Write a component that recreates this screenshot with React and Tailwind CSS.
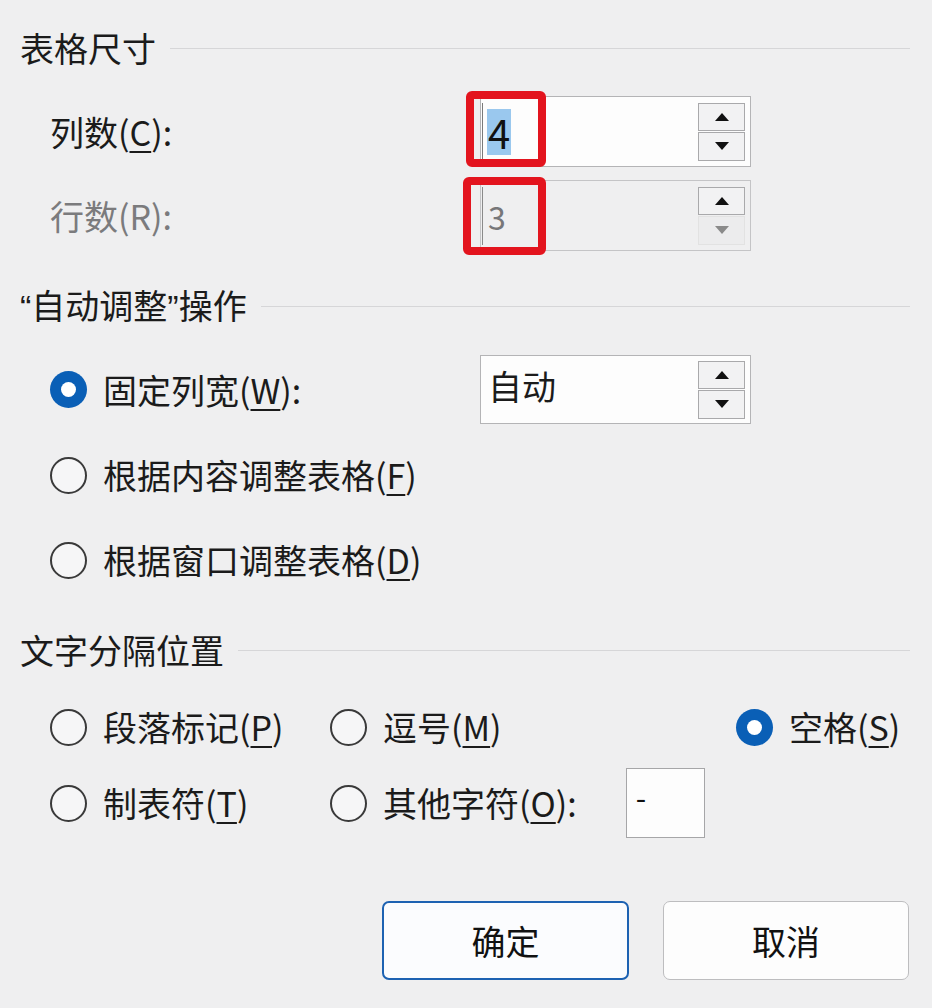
import React from 'react';

const FONT = { fontFamily: '"Noto Sans CJK SC", "Noto Sans", sans-serif' };

function Key({ children }) {
  return <span className="underline decoration-[1.5px] underline-offset-[5px]">{children}</span>;
}

function Header({ children }) {
  return (
    <div className="flex items-center h-[40px] pl-[20px] pr-[22px]">
      <span className="text-[34px] leading-none text-[#1b1b1b] whitespace-nowrap">{children}</span>
      <div className="flex-1 h-px bg-[#d6d6d8] ml-[14px]" />
    </div>
  );
}

function Arrow({ up, muted }) {
  return (
    <svg width="16" height="10" viewBox="0 0 16 10">
      <polygon points={up ? '8,1 15,9 1,9' : '1,1 15,1 8,9'} fill={muted ? '#8a8a8a' : '#111'} />
    </svg>
  );
}

function SpinButtons({ disabled }) {
  return (
    <div className="flex flex-col gap-px">
      <div className="w-[47px] h-[28px] flex items-center justify-center border border-[#a9a9ab] bg-[#f2f2f3]">
        <Arrow up />
      </div>
      <div
        className={
          disabled
            ? 'w-[47px] h-[29px] flex items-center justify-center border border-[#e2e2e2] bg-[#ececed]'
            : 'w-[47px] h-[29px] flex items-center justify-center border border-[#a9a9ab] bg-[#f2f2f3]'
        }
      >
        <Arrow muted={disabled} />
      </div>
    </div>
  );
}

function Radio({ checked }) {
  if (checked) {
    return (
      <div className="w-[37px] h-[37px] shrink-0 rounded-full bg-[#0a5fb6] flex items-center justify-center">
        <div className="w-[15px] h-[15px] rounded-full bg-white" />
      </div>
    );
  }
  return <div className="w-[37px] h-[37px] shrink-0 rounded-full border-[2px] border-[#3a3a3a] bg-[#f6f6f7]" />;
}

function RadioLabel({ checked, children }) {
  return (
    <div className="flex items-center gap-[16px]">
      <Radio checked={checked} />
      <span className="text-[34px] leading-none text-[#1b1b1b] whitespace-nowrap">{children}</span>
    </div>
  );
}

// narrow latin quote marks like the original dialog font
function Q({ children }) {
  return <span style={{ fontFamily: '"Liberation Sans", sans-serif' }}>{children}</span>;
}

export default function App() {
  return (
    <div className="w-[932px] h-[1008px] bg-[#efeff0] flex flex-col pt-[28px] overflow-hidden" style={FONT}>
      <Header>表格尺寸</Header>

      {/* 列数 */}
      <div className="flex items-center h-[71px] mt-[28px]">
        <div className="w-[480px] pl-[50px] text-[34px] leading-none text-[#1b1b1b]">
          列数(<Key>C</Key>):
        </div>
        <div className="relative w-[271px] h-[71px] border border-[#b4b4b6] bg-[#fdfdfd] flex items-center justify-between pr-[5px]">
          <div className="flex items-center h-full pl-[1px]">
            <div className="w-px h-[58px] bg-[#7a7a7a]" />
            <span className="ml-[4px] bg-[#9ac8ee] h-[46px] px-[1px] text-[40px] leading-[46px] text-[#111]">4</span>
          </div>
          <SpinButtons />
          <div className="absolute left-[-15px] top-[-6px] w-[80px] h-[76px] border-[8px] border-[#e3141e] rounded-[6px]" />
        </div>
      </div>

      {/* 行数 */}
      <div className="flex items-center h-[71px] mt-[13px]">
        <div className="w-[480px] pl-[50px] text-[34px] leading-none text-[#7b7b7d]">行数(R):</div>
        <div className="relative w-[271px] h-[71px] border border-[#c4c4c6] bg-[#efeff0] flex items-center justify-between pr-[5px]">
          <div className="flex items-center h-full pl-[1px]">
            <div className="w-px h-[58px] bg-[#8a8a8a]" />
            <span className="ml-[5px] text-[32px] leading-none text-[#777779]">3</span>
          </div>
          <SpinButtons disabled />
          <div className="absolute left-[-18px] top-[-4px] w-[83px] h-[78px] border-[8px] border-[#e3141e] rounded-[6px]" />
        </div>
      </div>

      <div className="mt-[35px]">
        <Header>
          <Q>“</Q>自动调整<Q>”</Q>操作
        </Header>
      </div>

      {/* 固定列宽 */}
      <div className="flex items-center h-[69px] mt-[29px]">
        <div className="w-[480px] pl-[50px]">
          <RadioLabel checked>
            固定列宽(<Key>W</Key>):
          </RadioLabel>
        </div>
        <div className="w-[271px] h-[69px] border border-[#b4b4b6] bg-[#fdfdfd] flex items-center justify-between pr-[5px]">
          <span className="pl-[7px] pb-[8px] text-[34px] leading-none text-[#1b1b1b]">自动</span>
          <SpinButtons />
        </div>
      </div>

      <div className="flex items-center h-[70px] mt-[16px] pl-[50px]">
        <RadioLabel>
          根据内容调整表格(<Key>F</Key>)
        </RadioLabel>
      </div>

      <div className="flex items-center h-[70px] mt-[15px] pl-[50px]">
        <RadioLabel>
          根据窗口调整表格(<Key>D</Key>)
        </RadioLabel>
      </div>

      <div className="mt-[35px]">
        <Header>文字分隔位置</Header>
      </div>

      {/* 分隔符 row 1 */}
      <div className="flex items-center h-[40px] mt-[37px] pl-[50px]">
        <div className="w-[280px]">
          <RadioLabel>
            段落标记(<Key>P</Key>)
          </RadioLabel>
        </div>
        <div className="w-[406px]">
          <RadioLabel>
            逗号(<Key>M</Key>)
          </RadioLabel>
        </div>
        <RadioLabel checked>
          空格(<Key>S</Key>)
        </RadioLabel>
      </div>

      {/* 分隔符 row 2 */}
      <div className="flex items-center h-[70px] mt-[21px] pl-[50px]">
        <div className="w-[280px]">
          <RadioLabel>
            制表符(<Key>T</Key>)
          </RadioLabel>
        </div>
        <RadioLabel>
          其他字符(<Key>O</Key>):
        </RadioLabel>
        <div className="ml-[49px] w-[79px] h-[70px] border border-[#a6a6a8] bg-[#fdfdfd] pl-[9px] pt-[12px]">
          <span className="text-[30px] leading-none text-[#111]">-</span>
        </div>
      </div>

      {/* buttons */}
      <div className="flex justify-end gap-[34px] pr-[23px] mt-[63px]">
        <button className="w-[247px] h-[79px] rounded-[7px] border-2 border-[#1d62b2] bg-[#fbfcfe] text-[34px] text-[#111]">
          确定
        </button>
        <button className="w-[246px] h-[79px] rounded-[7px] border border-[#bdbdbf] bg-[#fdfdfd] text-[34px] text-[#111]">
          取消
        </button>
      </div>
    </div>
  );
}
